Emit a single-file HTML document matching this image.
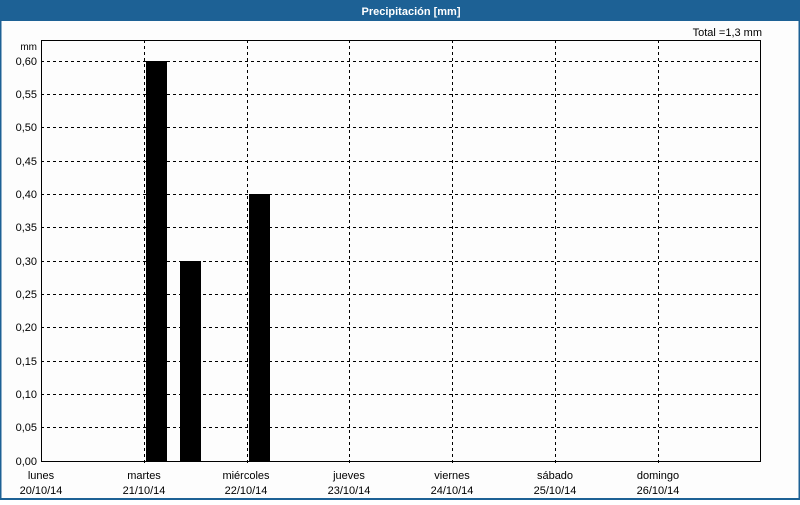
<!DOCTYPE html><html><head><style>body{margin:0;width:800px;height:500px;overflow:hidden;background:#fff}</style></head><body>
<svg width="800" height="500" xmlns="http://www.w3.org/2000/svg" font-family="Liberation Sans, DejaVu Sans, sans-serif" font-size="11">
<rect x="0" y="0" width="800" height="500" fill="#fdfdfd"/>
<rect x="0" y="0" width="800" height="21" fill="#1d6195"/>
<text x="411" y="15" fill="#fff" font-weight="bold" text-anchor="middle" font-size="11">Precipitación [mm]</text>
<rect x="0.5" y="20" width="799" height="479" fill="none" stroke="#1d6195" stroke-width="2"/>
<text x="762" y="36" text-anchor="end">Total =1,3 mm</text>
<text x="37" y="50" text-anchor="end" font-size="10">mm</text>
<g stroke="#000" stroke-dasharray="3,3" stroke-width="1">
<line x1="41" y1="61.5" x2="760" y2="61.5"/><line x1="41" y1="94.5" x2="760" y2="94.5"/><line x1="41" y1="127.5" x2="760" y2="127.5"/><line x1="41" y1="161.5" x2="760" y2="161.5"/><line x1="41" y1="194.5" x2="760" y2="194.5"/><line x1="41" y1="227.5" x2="760" y2="227.5"/><line x1="41" y1="261.5" x2="760" y2="261.5"/><line x1="41" y1="294.5" x2="760" y2="294.5"/><line x1="41" y1="327.5" x2="760" y2="327.5"/><line x1="41" y1="361.5" x2="760" y2="361.5"/><line x1="41" y1="394.5" x2="760" y2="394.5"/><line x1="41" y1="427.5" x2="760" y2="427.5"/>
<line x1="144.5" y1="40" x2="144.5" y2="465"/><line x1="247.5" y1="40" x2="247.5" y2="465"/><line x1="349.5" y1="40" x2="349.5" y2="465"/><line x1="452.5" y1="40" x2="452.5" y2="465"/><line x1="555.5" y1="40" x2="555.5" y2="465"/><line x1="658.5" y1="40" x2="658.5" y2="465"/>
</g>
<rect x="146" y="61" width="21" height="400" fill="#000"/>
<rect x="180" y="261" width="21" height="200" fill="#000"/>
<rect x="249" y="194" width="21" height="267" fill="#000"/>
<rect x="41.5" y="40.5" width="719" height="421" fill="none" stroke="#000"/>
<g text-anchor="end" font-size="11">
<text x="37" y="65">0,60</text><text x="37" y="98">0,55</text><text x="37" y="131">0,50</text><text x="37" y="165">0,45</text><text x="37" y="198">0,40</text><text x="37" y="231">0,35</text><text x="37" y="265">0,30</text><text x="37" y="298">0,25</text><text x="37" y="331">0,20</text><text x="37" y="365">0,15</text><text x="37" y="398">0,10</text><text x="37" y="431">0,05</text><text x="37" y="465">0,00</text>
</g>
<g text-anchor="middle" font-size="11">
<text x="41" y="479">lunes</text><text x="41" y="494">20/10/14</text>
<text x="144" y="479">martes</text><text x="144" y="494">21/10/14</text>
<text x="246" y="479">miércoles</text><text x="246" y="494">22/10/14</text>
<text x="349" y="479">jueves</text><text x="349" y="494">23/10/14</text>
<text x="452" y="479">viernes</text><text x="452" y="494">24/10/14</text>
<text x="555" y="479">sábado</text><text x="555" y="494">25/10/14</text>
<text x="658" y="479">domingo</text><text x="658" y="494">26/10/14</text>
</g>
</svg></body></html>
